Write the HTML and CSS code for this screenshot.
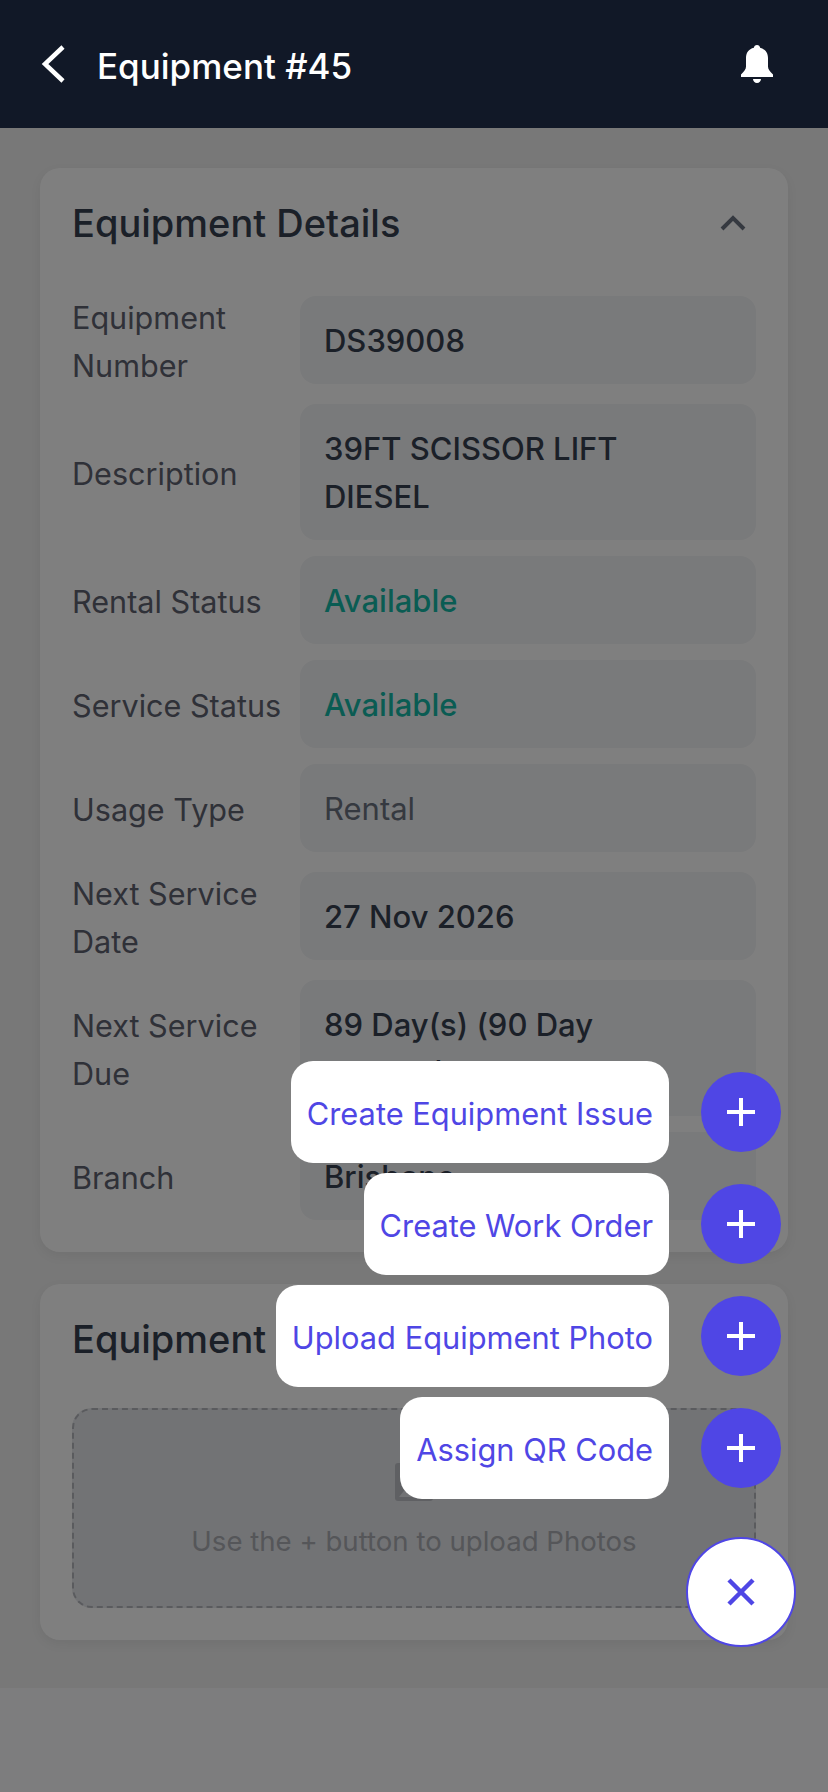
FILE: index.html
```html
<!DOCTYPE html>
<html lang="en">
<head>
  <meta charset="UTF-8">
  <title>Equipment #45</title>
  <link rel="stylesheet" href="styles.css">
</head>
<body>

  <div class="topbar">
    <svg class="back" width="26" height="40" viewBox="0 0 26 40"><path d="M23 3 L5 20 L23 37" fill="none" stroke="#fff" stroke-width="4.5"/></svg>
    <h1>Equipment #45</h1>
    <svg class="bell" width="32" height="38" viewBox="0 0 32 38"><path fill="#fff" d="M16 0c1.700 0 3 1.200 3.100 2.800C24.500 4 27 8 27 13v8.500c0 2.500 1.700 5 5 8V32H0v-2.500c3.300-3 5-5.500 5-8V13C5 8 7.500 4 12.900 2.800 13 1.200 14.300 0 16 0zM12 34h8c0 2.300-1.700 4-4 4s-4-1.700-4-4z"/></svg>
  </div>

  <div class="content">
    <div class="card">
      <div class="card-head">
        <h2>Equipment Details</h2>
        <svg width="26" height="16" viewBox="0 0 26 16"><path d="M2 14 L13 3 L24 14" fill="none" stroke="#6b7280" stroke-width="4"/></svg>
      </div>
      <div class="row"><div class="label">Equipment Number</div><div class="value">DS39008</div></div>
      <div class="row"><div class="label">Description</div><div class="value">39FT SCISSOR LIFT DIESEL</div></div>
      <div class="row"><div class="label">Rental Status</div><div class="value ok">Available</div></div>
      <div class="row"><div class="label">Service Status</div><div class="value ok">Available</div></div>
      <div class="row"><div class="label">Usage Type</div><div class="value muted">Rental</div></div>
      <div class="row"><div class="label">Next Service Date</div><div class="value">27 Nov 2026</div></div>
      <div class="row"><div class="label">Next Service Due</div><div class="value">89 Day(s) (90 Day Interval)</div></div>
      <div class="row"><div class="label">Branch</div><div class="value">Brisbane</div></div>
    </div>

    <div class="card">
      <div class="card-head">
        <h2>Equipment Photos</h2>
      </div>
      <div class="dropzone">
        <svg width="38" height="38" viewBox="0 0 38 38"><rect width="38" height="38" rx="3" fill="#bfc1c6"/><path d="M4 34 L12 24 L18 30 L26 20 L34 34 Z" fill="#e5e7eb"/></svg>
        <p>Use the + button to upload Photos</p>
      </div>
    </div>
  </div>
  <div class="bottom-strip"></div>

  <div class="scrim"></div>

  <div class="fab-menu">
    <div class="fab-row">
      <div class="pill">Create Equipment Issue</div>
      <div class="plus"><svg width="28" height="28" viewBox="0 0 28 28"><path d="M14 0V28M0 14H28" stroke="#fff" stroke-width="4"/></svg></div>
    </div>
    <div class="fab-row">
      <div class="pill">Create Work Order</div>
      <div class="plus"><svg width="28" height="28" viewBox="0 0 28 28"><path d="M14 0V28M0 14H28" stroke="#fff" stroke-width="4"/></svg></div>
    </div>
    <div class="fab-row">
      <div class="pill">Upload Equipment Photo</div>
      <div class="plus"><svg width="28" height="28" viewBox="0 0 28 28"><path d="M14 0V28M0 14H28" stroke="#fff" stroke-width="4"/></svg></div>
    </div>
    <div class="fab-row">
      <div class="pill">Assign QR Code</div>
      <div class="plus"><svg width="28" height="28" viewBox="0 0 28 28"><path d="M14 0V28M0 14H28" stroke="#fff" stroke-width="4"/></svg></div>
    </div>
    <div class="close">
      <svg width="28" height="28" viewBox="0 0 28 28"><path d="M2 2 L26 26 M26 2 L2 26" stroke="#4f46e5" stroke-width="4.500"/></svg>
    </div>
  </div>

</body>
</html>
```

FILE: styles.css
```css
html, body {
  margin: 0;
  height: 1792px;
  overflow: hidden;
}

body {
  font-family: Inter, 'Noto Sans', sans-serif;
  background-color: #f0f0f0;
  position: relative;
}

.topbar {
  height: 128px;
  background-color: #111827;
  display: flex;
  align-items: center;
  padding: 0 55px 0 40px;
  box-sizing: border-box;
  position: relative;
  z-index: 2;
}

.topbar h1 {
  flex: 1;
  margin: 3px 0 0 31px;
  font-size: 35px;
  font-weight: 550;
  color: #fff;
}

.content {
  height: 1560px;
  box-sizing: border-box;
  padding: 40px 40px 0;
}

.card {
  background-color: #fff;
  border-radius: 20px;
  padding: 0 32px 32px;
  margin-bottom: 32px;
  box-shadow: 0 4px 12px rgba(0, 0, 0, 0.06);
}

.card-head {
  height: 124px;
  box-sizing: border-box;
  padding: 0 10px 14px 0;
  display: flex;
  align-items: center;
  justify-content: space-between;
}

.card-head h2 {
  margin: 0;
  font-size: 38px;
  font-weight: 500;
  color: #374151;
}

.row {
  display: flex;
  align-items: center;
  margin-bottom: 16px;
}

.row:last-child {
  margin-bottom: 0;
}

.label {
  width: 228px;
  flex: none;
  padding-top: 2px;
  margin-bottom: -2px;
  font-size: 30.600px;
  line-height: 48px;
  color: #5f6270;
}

.value {
  flex: 1;
  background-color: #f3f4f6;
  border-radius: 16px;
  padding: 21px 48px 19px 24px;
  font-size: 31px;
  line-height: 48px;
  font-weight: 450;
  color: #374151;
}

.ok {
  color: #14b8a6;
}

.muted {
  color: #6b7280;
  font-weight: 400;
}

.dropzone {
  height: 200px;
  box-sizing: border-box;
  border: 2px dashed #b4b6bc;
  border-radius: 20px;
  background-color: #e5e7eb;
  display: flex;
  flex-direction: column;
  align-items: center;
  padding-top: 53px;
}

.dropzone p {
  margin: 23px 0 0;
  font-size: 27.600px;
  color: #aaacb2;
}

.bottom-strip {
  height: 104px;
  background-color: #fafbfc;
}

.scrim {
  position: absolute;
  top: 0;
  left: 0;
  right: 0;
  bottom: 0;
  background-color: rgba(0, 0, 0, 0.5);
  z-index: 1;
}

.fab-menu {
  position: absolute;
  right: 32px;
  bottom: 145px;
  z-index: 3;
  display: flex;
  flex-direction: column;
  align-items: flex-end;
  gap: 10px;
}

.fab-row {
  height: 102px;
  display: flex;
  align-items: center;
  gap: 32px;
  margin-right: 15px;
}

.pill {
  height: 102px;
  box-sizing: border-box;
  background-color: #fff;
  border-radius: 22px;
  padding: 3px 16px 0;
  display: flex;
  align-items: center;
  font-size: 30.800px;
  color: #4f46e5;
}

.plus {
  width: 80px;
  height: 80px;
  border-radius: 50%;
  background-color: #4f46e5;
  display: flex;
  align-items: center;
  justify-content: center;
}

.close {
  width: 110px;
  height: 110px;
  box-sizing: border-box;
  margin-top: 28px;
  border-radius: 50%;
  border: 2px solid #4f46e5;
  background-color: #fff;
  display: flex;
  align-items: center;
  justify-content: center;
}
```
